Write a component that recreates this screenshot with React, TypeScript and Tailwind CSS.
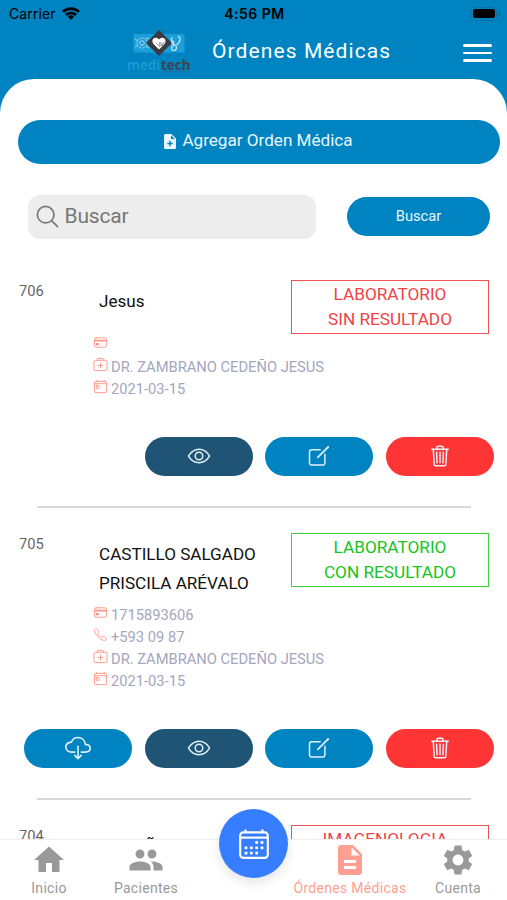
import type { ReactNode } from "react";
import {
  IoCalendarOutline,
  IoCallOutline,
  IoCardOutline,
  IoCloudDownloadOutline,
  IoEyeOutline,
  IoMedkitOutline,
  IoSearchOutline,
  IoTodayOutline,
  IoTrashOutline,
} from "react-icons/io5";
import { MdDescription, MdHome, MdPeople, MdSettings } from "react-icons/md";

function StatusBar() {
  return (
    <div className="flex h-7 items-center justify-between pl-[9px] pr-[7px] text-black font-['Inter','Liberation_Sans',sans-serif]">
      <div className="-mt-px flex w-[200px] items-center gap-[6px] text-[14px] tracking-[0.1px]">
        <span>Carrier</span>
        <svg width="18" height="13" viewBox="0 0 18 13" fill="none" stroke="currentColor" strokeWidth="2.7">
          <path d="M1 4.800a11.500 11.500 0 0 1 16 0" />
          <path d="M4 8a7 7 0 0 1 10 0" />
          <path d="M9 13 5.900 9.800a4.500 4.500 0 0 1 6.200 0z" fill="currentColor" stroke="none" />
        </svg>
      </div>
      <span className="-mt-px text-[14px] font-semibold tracking-[0.5px] whitespace-nowrap">4:56 PM</span>
      <div className="-mt-px flex w-[200px] items-center justify-end gap-px">
        <div className="h-[14px] w-[27px] rounded-[4px] border-[1.5px] border-[#0871a8] p-[1.5px]">
          <div className="h-full rounded-[2px] bg-black" />
        </div>
        <div className="h-[4px] w-[2px] rounded-r-full bg-[#0871a8]" />
      </div>
    </div>
  );
}

function Logo() {
  return (
    <svg width="66" height="44" viewBox="0 0 66 44">
      <rect x="7.500" y="5" width="51" height="18.500" fill="#1c9fd8" />
      <g fill="none" stroke="#a9dcf3" strokeWidth="1">
        <circle cx="16" cy="14" r="5" strokeDasharray="2 1" />
        <circle cx="16" cy="14" r="2.300" />
        <path d="m9 10 3 2m-3 6 3-2m8-6 3-1m-3 8 3 2" />
      </g>
      <g fill="none" stroke="#c5eaf9" strokeWidth="1.200">
        <path d="M46.500 8.500c-2 1-1 6.500 2 7.500 3.500.5 6-3.500 5.500-7.500l-2-1.500M48.500 16c-4 1.500-3.500 5.500-1 5.500 3 0 3.500-2.500 2.500-4.500" />
        <circle cx="46.500" cy="13.500" r="1.300" />
      </g>
      <path d="M33 1 46 14 33 27 20 14z" fill="#3c3a41" />
      <path d="M33 20.500 27.500 15c-3.500-5 2.500-8.500 5.500-4.500 3-4 9-.5 5.500 4.500z" fill="white" />
      <path d="m30 14 3 3 1-4 2 4 2-4m-5 5 4-4" fill="none" stroke="#85858b" strokeWidth=".8" />
      <text x="1" y="41" fontFamily="Noto Sans, sans-serif" fontSize="14" textLength="33" lengthAdjust="spacingAndGlyphs" fill="#1b9cd7" fontWeight="600">
        medi
      </text>
      <text x="35" y="41" fontFamily="Noto Sans, sans-serif" fontSize="14.500" textLength="29.500" lengthAdjust="spacingAndGlyphs" fill="#3f4450" fontWeight="700">
        tech
      </text>
      <path d="M36 42.700h25" stroke="#2a6c92" strokeWidth=".7" />
    </svg>
  );
}

function NotePlusIcon() {
  return (
    <svg width="12" height="15" viewBox="0 0 12 15">
      <path
        fill="currentColor"
        fillRule="evenodd"
        d="M1.500 0H7.500L12 4.500V13.500Q12 15 10.500 15H1.500Q0 15 0 13.500V1.500Q0 0 1.500 0ZM7 1.200V5H10.800ZM5.300 6.800V8.800H3.300V10.200H5.300V12.200H6.700V10.200H8.700V8.800H6.700V6.800Z"
      />
    </svg>
  );
}

function EditIcon() {
  return (
    <svg width="24" height="24" viewBox="0 0 24 24" fill="none" stroke="currentColor" strokeWidth="1.500" strokeLinecap="round" strokeLinejoin="round">
      <path d="M13.200 5.700H4.800a2.300 2.300 0 0 0-2.300 2.300v10.800a2.300 2.300 0 0 0 2.300 2.300h10.800a2.300 2.300 0 0 0 2.300-2.300v-8.600" />
      <path d="m10.800 13.300 9.700-9.600" strokeWidth="1.700" />
      <path d="m20.700 3.500.5-.5" strokeWidth="1.900" />
    </svg>
  );
}

type Tone = "red" | "green";

const toneClass: Record<Tone, string> = {
  red: "outline-[#ee5253] text-[#ee4345]",
  green: "outline-[#3bd23b] text-[#17c41b]",
};

function Status({ tone, lines, className = "" }: { tone: Tone; lines: string[]; className?: string }) {
  return (
    <div className={`ml-auto mr-[18px] h-[54px] w-[198px] pt-[1.500px] text-center text-[17.2px] leading-[25.5px] outline-[1.5px] -outline-offset-[1.5px] ${toneClass[tone]} ${className}`}>
      {lines.map((line) => (
        <div key={line}>{line}</div>
      ))}
    </div>
  );
}

function Info({ icon, children }: { icon: ReactNode; children?: ReactNode }) {
  return (
    <div className="flex h-[22px] items-center gap-[3px] whitespace-nowrap">
      <span className="-mt-[5px] text-[15px] text-[#ff9486]">{icon}</span>
      <span className="text-[14.7px] text-[#a3a6bc]">{children}</span>
    </div>
  );
}

function Pill({ className, children }: { className: string; children: ReactNode }) {
  return <button className={`flex h-[39px] w-[108px] items-center justify-center rounded-full text-2xl text-[#e0f1fb] ${className}`}>{children}</button>;
}

function Actions({ download = false }: { download?: boolean }) {
  return (
    <div className="flex justify-end gap-[12.5px] pr-[13.5px]">
      {download && (
        <Pill className="bg-[#0083c1]">
          <IoCloudDownloadOutline size={26} />
        </Pill>
      )}
      <Pill className="bg-[#1f5475]">
        <IoEyeOutline />
      </Pill>
      <Pill className="bg-[#0083c1]">
        <EditIcon />
      </Pill>
      <Pill className="bg-[#ff3535]">
        <IoTrashOutline />
      </Pill>
    </div>
  );
}

function Tab({ icon, label, className }: { icon: ReactNode; label: string; className: string }) {
  return (
    <div className={`flex flex-col items-center whitespace-nowrap ${className}`}>
      <span className="flex h-[39px] items-center text-[36px]">{icon}</span>
      <span className="text-[14px] leading-[18px] tracking-[0.3px]">{label}</span>
    </div>
  );
}

export default function App() {
  return (
    <div className="flex h-[900px] w-[507px] flex-col overflow-hidden bg-[#0083c1] font-['Roboto','Liberation_Sans',sans-serif]">
      <StatusBar />
      <header className="flex h-[51px] shrink-0 items-start pl-[126px] pr-[15px]">
        <div className="pt-px">
          <Logo />
        </div>
        <h1 className="ml-5 mt-[9px] text-[21px] leading-7 tracking-[1.1px] whitespace-nowrap text-white">Órdenes Médicas</h1>
        <div className="ml-auto mt-4 flex w-[29px] flex-col gap-[5px]">
          <div className="h-[2.5px] rounded bg-white" />
          <div className="h-[2.5px] rounded bg-white" />
          <div className="h-[2.5px] rounded bg-white" />
        </div>
      </header>

      <main className="flex h-[760px] shrink-0 flex-col overflow-hidden rounded-t-[34px] bg-white pt-[41px]">
        <button className="ml-[18px] flex h-[43.5px] w-[482px] shrink-0 items-center justify-center gap-[6px] rounded-full bg-[#0083c1] pr-px text-[17.1px] text-[#e9f6fc]">
          <NotePlusIcon />
          <span className="-mt-px">Agregar Orden Médica</span>
        </button>
        <div className="mt-[31px] flex shrink-0 items-center pl-7">
          <div className="flex h-11 w-[288px] items-center rounded-xl bg-[#ededed] pl-[6px] text-[21px] text-[#777]">
            <IoSearchOutline size={27} />
            <span className="ml-[3.5px] tracking-[-0.2px]">Buscar</span>
          </div>
          <button className="ml-[31px] h-[39px] w-[143px] rounded-full bg-[#0083c1] text-[14.7px] text-[#e9f6fc]">Buscar</button>
        </div>

        <section className="mt-[41.5px] h-[227px] shrink-0">
          <div className="flex h-[54px]">
            <span className="ml-[19px] w-20 pt-px text-[14.7px] leading-5 text-[#666]">706</span>
            <span className="pt-[7px] text-[17.1px] leading-[29px] text-[#111]">Jesus</span>
            <Status tone="red" lines={["LABORATORIO", "SIN RESULTADO"]} />
          </div>
          <div className="h-[102.5px] pl-[93px]">
            <Info icon={<IoCardOutline />} />
            <Info icon={<IoMedkitOutline />}>DR. ZAMBRANO CEDEÑO JESUS</Info>
            <Info icon={<IoTodayOutline />}>2021-03-15</Info>
          </div>
          <Actions />
          <div className="mt-[30.5px] ml-[37px] h-[1.5px] w-[434px] bg-[#d8d8d8]" />
        </section>

        <section className="mt-[26px] h-[266px] shrink-0">
          <div className="flex h-[71px]">
            <span className="ml-[19px] w-20 pt-px text-[14.7px] leading-5 text-[#666]">705</span>
            <span className="pt-[7px] text-[17.1px] leading-[29.3px] whitespace-nowrap text-[#111]">
              CASTILLO SALGADO
              <br />
              PRISCILA ARÉVALO
            </span>
            <Status tone="green" lines={["LABORATORIO", "CON RESULTADO"]} />
          </div>
          <div className="h-[124.5px] pl-[93px]">
            <Info icon={<IoCardOutline />}>1715893606</Info>
            <Info icon={<IoCallOutline />}>+593 09 87</Info>
            <Info icon={<IoMedkitOutline />}>DR. ZAMBRANO CEDEÑO JESUS</Info>
            <Info icon={<IoTodayOutline />}>2021-03-15</Info>
          </div>
          <Actions download />
          <div className="mt-[30.5px] ml-[37px] h-[1.5px] w-[434px] bg-[#d8d8d8]" />
        </section>

        <section className="mt-[26px] flex shrink-0">
          <span className="ml-[19px] w-20 pt-px text-[14.7px] leading-5 text-[#666]">704</span>
          <span className="pt-[7px] text-[17.1px] leading-[29px] whitespace-nowrap text-[#111]">ORDOÑEZ</span>
          <Status tone="red" lines={["IMAGENOLOGIA"]} className="pr-[10px]" />
        </section>
      </main>

      <nav className="relative flex h-[61px] shrink-0 border-t border-[#eee] bg-white text-[#999]">
        <Tab icon={<MdHome />} label="Inicio" className="ml-1 w-[90px]" />
        <Tab icon={<MdPeople />} label="Pacientes" className="w-[104px]" />
        <div className="absolute -top-[31px] left-[219px] flex size-[69px] items-center justify-center rounded-full bg-[#377dff] text-white shadow-[0_5px_12px_rgba(0,0,0,0.1)]">
          <IoCalendarOutline size={34} />
        </div>
        <Tab icon={<MdDescription />} label="Órdenes Médicas" className="ml-[92px] w-[120px] text-[#ff9f91]" />
        <Tab icon={<MdSettings />} label="Cuenta" className="ml-[3px] w-[90px]" />
      </nav>
    </div>
  );
}
